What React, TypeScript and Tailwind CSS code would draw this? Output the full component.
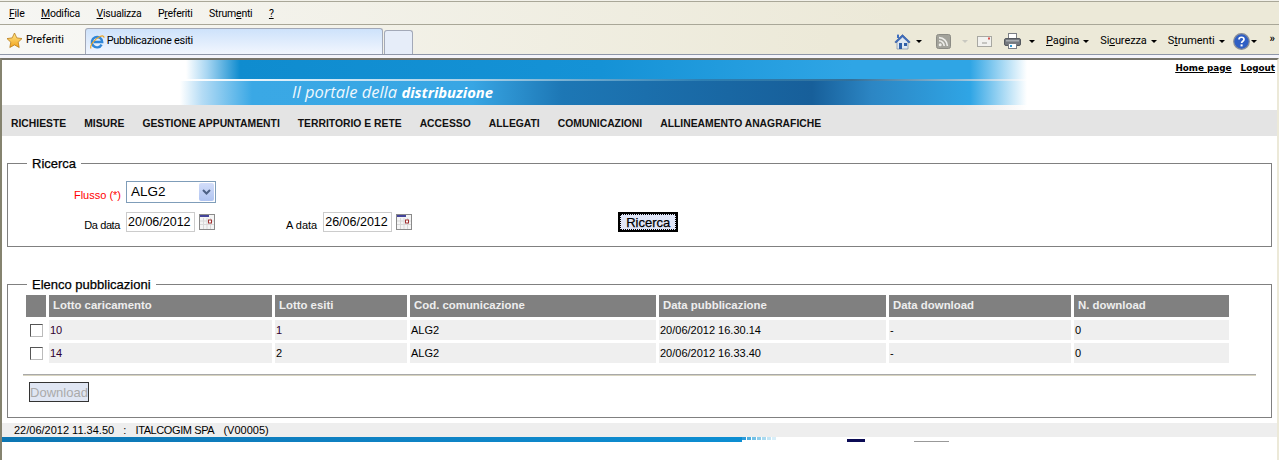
import React from "react";

const arial = "font-['Liberation_Sans',Arial,sans-serif]";
const chrome = "font-['Roboto',sans-serif]";

const menuItems: [string, string, string][] = [
  ["", "F", "ile"],
  ["", "M", "odifica"],
  ["", "V", "isualizza"],
  ["P", "r", "eferiti"],
  ["Strum", "e", "nti"],
  ["", "?", ""],
];

const navItems = ["RICHIESTE", "MISURE", "GESTIONE APPUNTAMENTI", "TERRITORIO E RETE", "ACCESSO", "ALLEGATI", "COMUNICAZIONI", "ALLINEAMENTO ANAGRAFICHE"];

const columns = [
  { title: "Lotto caricamento", width: "w-[223px]" },
  { title: "Lotto esiti", width: "w-[132px]" },
  { title: "Cod. comunicazione", width: "w-[246px]" },
  { title: "Data pubblicazione", width: "w-[227px]" },
  { title: "Data download", width: "w-[182px]" },
  { title: "N. download", width: "w-[155px]" },
];

const rows = [
  ["10", "1", "ALG2", "20/06/2012 16.30.14", "-", "0"],
  ["14", "2", "ALG2", "20/06/2012 16.33.40", "-", "0"],
];

// footer image dissolves into small squares at its right end
const fadeSquares = ["bg-[#2c9ad9]", "bg-[#4fb0e0]", "bg-[#72c0e6]", "bg-[#8fcdea]", "bg-[#a9d9ef]", "bg-[#c4e5f4]", "bg-[#d8eef8]"];

const Caret = ({ className = "" }: { className?: string }) => (
  <span className={`inline-block h-0 w-0 border-x-[3px] border-t-[3px] border-x-transparent border-t-black ${className}`} />
);

const StarIcon = () => (
  <svg width="17" height="17" viewBox="0 0 17 17">
    <defs>
      <linearGradient id="star" x1="0" y1="0" x2="0" y2="1">
        <stop offset="0" stopColor="#ffe98a" />
        <stop offset="1" stopColor="#f2a21c" />
      </linearGradient>
    </defs>
    <path d="M8.5 1l2.3 4.9 5.2.7-3.8 3.6 1 5.3-4.7-2.6-4.7 2.6 1-5.3L1 6.6l5.2-.7z" fill="url(#star)" stroke="#b97c1a" strokeWidth="0.8" />
  </svg>
);

const IeIcon = () => (
  <svg width="16" height="16" viewBox="0 0 16 16">
    <path d="M12.6 10.6A5.2 5.2 0 1 1 13.2 8H4.6" fill="none" stroke="#2f86d8" strokeWidth="2.4" />
    <path d="M2 14.5C.5 12 5 5 11 2.5c2.5-1 4-.6 4 1.2" fill="none" stroke="#e9a52a" strokeWidth="1.2" />
  </svg>
);

const HomeIcon = () => (
  <svg width="17" height="17" viewBox="0 0 17 17">
    <path d="M3 8v8h11V8L8.5 3z" fill="#dfe8f2" stroke="#7d8ea3" strokeWidth="0.7" />
    <path d="M.8 9L8.5 1.6 16.2 9l-1.2 1L8.5 4 2 10z" fill="#3f6fc0" stroke="#2b4f91" strokeWidth="0.5" />
    <rect x="3" y="1.6" width="2" height="3.4" fill="#3f6fc0" />
    <rect x="5" y="10" width="3" height="6" fill="#2f5fa8" />
    <rect x="10" y="10" width="3" height="3" fill="#2f5fa8" />
  </svg>
);

const RssIcon = () => (
  <svg width="15" height="15" viewBox="0 0 15 15">
    <rect x="0.5" y="0.5" width="14" height="14" rx="2" fill="#a3a39b" stroke="#8c8c85" />
    <circle cx="4.2" cy="10.8" r="1.5" fill="#eeeeea" />
    <path d="M3 6.8a5.2 5.2 0 0 1 5.2 5.2M3 3.6A8.4 8.4 0 0 1 11.4 12" fill="none" stroke="#eeeeea" strokeWidth="1.6" />
  </svg>
);

const MailIcon = () => (
  <svg width="15" height="11" viewBox="0 0 15 11">
    <rect x="0.5" y="0.5" width="14" height="10" fill="#f1f1ee" stroke="#a8a8a2" />
    <rect x="5" y="6.5" width="5" height="1" fill="#9a9a94" />
    <rect x="11" y="1.5" width="2" height="2" fill="#d8504a" />
  </svg>
);

const PrinterIcon = () => (
  <svg width="17" height="16" viewBox="0 0 17 16">
    <rect x="4.5" y="0.5" width="8" height="6" fill="#fff" stroke="#7b7f85" />
    <rect x="0.5" y="5.5" width="16" height="7" rx="1.5" fill="#74787e" stroke="#55595f" />
    <rect x="2" y="7" width="13" height="1.5" fill="#a9adb2" />
    <rect x="4.5" y="10.5" width="8" height="5" fill="#fff" stroke="#7b7f85" />
    <rect x="6" y="12" width="2" height="2" fill="#2e9bd6" />
  </svg>
);

const HelpIcon = () => (
  <svg width="17" height="17" viewBox="0 0 17 17">
    <circle cx="8.5" cy="8.5" r="7.8" fill="#2f5fc4" stroke="#8a8f98" strokeWidth="1.2" />
    <path d="M6 6.5c0-3 5-3 5 0 0 1.8-2.4 1.8-2.4 3.6" fill="none" stroke="#fff" strokeWidth="1.7" />
    <rect x="7.6" y="11.4" width="2" height="2" fill="#fff" />
  </svg>
);

const CalendarIcon = () => (
  <svg width="16" height="17" viewBox="0 0 16 17" className="shrink-0">
    <rect x="0.5" y="0.5" width="15" height="15" fill="#f4f4f4" stroke="#8a8a8a" />
    <rect x="1" y="1" width="9" height="2" fill="#44449a" />
    <path d="M1 7h14M1 10.5h14M4.5 4v11M8 4v11M11.5 4v11" stroke="#d8d8d8" strokeWidth="1" />
    <rect x="9.5" y="6" width="3" height="3" fill="#fff" stroke="#a03030" />
  </svg>
);

const DateField = ({ value }: { value: string }) => (
  <input
    readOnly
    value={value}
    className="h-5 w-[69px] border border-[#ccc] px-[1px] text-[12.5px] leading-none text-black outline-none"
  />
);

const Browser = () => (
  <header className={`${chrome} text-[11px] tracking-[-0.1px] text-black`}>
    <div className="h-px bg-[#f2f1ea]" />
    <nav className="flex h-[24px] items-center gap-[16.5px] border-y border-[#a9a798] bg-[linear-gradient(90deg,#f6f6f3,#ece9d8_70%)] pl-[9px] pt-px text-[10.5px] tracking-[-0.25px]">
      {menuItems.map(([before, key, after]) => (
        <span key={before + key}>
          {before}
          <u>{key}</u>
          {after}
        </span>
      ))}
    </nav>
    <div className="flex h-[30px] items-end border-b border-[#8f97a8] bg-[linear-gradient(90deg,#f8f8f5,#ece9d8_65%)]">
      <div className="mb-[5px] flex items-center gap-[3px] pl-[6px]">
        <StarIcon />
        <span>Preferiti</span>
      </div>
      <div className="ml-[21px] flex h-[26px] w-[298px] items-center gap-[2px] rounded-t-[3px] border border-b-0 border-[#a3a9b8] bg-[linear-gradient(#cde2fb,#f2f6fe)] pl-[3px] tracking-[-0.3px]">
        <IeIcon />
        <span>Pubblicazione esiti</span>
      </div>
      <div className="ml-[1px] h-[24px] w-[29px] rounded-t-[3px] border border-b-0 border-[#a3a9b8] bg-[#e6edf9]" />
      <div className="ml-auto mb-[3px] flex h-[20px] items-center">
        <HomeIcon />
        <Caret className="ml-[5px]" />
        <span className="ml-[14px] flex"><RssIcon /></span>
        <span className="ml-[11px] h-0 w-0 border-x-[3px] border-t-[3px] border-x-transparent border-t-[#c8c8c0]" />
        <span className="ml-[9px] flex"><MailIcon /></span>
        <span className="ml-[12px] flex"><PrinterIcon /></span>
        <Caret className="ml-[8px]" />
        <span className="ml-[11px]"><u>P</u>agina</span>
        <Caret className="ml-[4px]" />
        <span className="ml-[11px]">Si<u>c</u>urezza</span>
        <Caret className="ml-[4px]" />
        <span className="ml-[11px]">S<u>t</u>rumenti</span>
        <Caret className="ml-[4px]" />
        <span className="ml-[8px] flex"><HelpIcon /></span>
        <Caret className="ml-[1px]" />
        <span className="mb-[6px] ml-[13px] mr-[4px] text-[11px] font-bold leading-none">»</span>
      </div>
    </div>
    <div className="h-[3px] bg-[#f4f4fb]" />
  </header>
);

const Banner = () => (
  <div className="flex h-[50px] bg-white">
    <div className="flex w-[1025px] shrink-0 flex-col">
      <div className="flex flex-1 flex-col bg-[linear-gradient(90deg,#fff_184px,#a8d6f2_205px,#0f8ccf_238px,#1592d6_600px,#2fa5e5_850px,#2fa5e5_968px,#fff_1025px)]">
        <div className="h-[19px]" />
        <div className="h-[2px] bg-[linear-gradient(90deg,#fff_184px,#d5ebf8_300px,#a8cfe6_480px,#2d7fb3_700px,#33709a_850px,#9fc4dc_968px,#fff_1025px)]" />
        <div className="flex flex-1 items-center bg-[linear-gradient(90deg,#fff_178px,#b5dcf5_200px,#3aa8e5_250px,#38a6e4_470px,#1d77b5_560px,#175f9a_810px,#2c86c4_870px,#2fa5e5_968px,#fff_1025px)] pb-[2px] pl-[290px]">
          <span className="font-['Open_Sans',sans-serif] text-[16.5px] italic leading-none text-[#eef7fd]">
            Il portale della <b className="text-[14.8px] font-bold text-white">distribuzione</b>
          </span>
        </div>
      </div>
      <div className="h-[5px] bg-[linear-gradient(90deg,#e4e4e4_960px,#fff_1025px)]" />
    </div>
    <div className="flex flex-1 justify-end gap-[9px] pr-[2px] pt-[2px] font-['DejaVu_Sans',sans-serif] text-[8.8px] font-bold leading-[12px] text-black underline">
      <a>Home page</a>
      <a>Logout</a>
    </div>
  </div>
);

const Search = () => (
  <fieldset className="mx-[5px] mt-[18px] border border-[#808080] pb-[14px]">
    <legend className="ml-[19px] px-[5px] pt-[2px] text-[13px] leading-[16px] [-webkit-text-stroke:0.25px_black]">Ricerca</legend>
    <div className="flex items-end pt-[9px]">
      <label className="w-[113px] pb-px text-right text-[11px] leading-[14px] text-[#f00]">Flusso (*)</label>
      <div className="ml-[5px] flex h-[22px] w-[90px] items-center justify-between border border-[#7f9db9] pl-[4px] pr-[1px] text-[13.5px]">
        <span>ALG2</span>
        <span className="flex h-[18px] w-[15px] items-center justify-center rounded-[2px] bg-[linear-gradient(#d2ddf9,#b0c4f1)]">
          <svg width="9" height="6" viewBox="0 0 9 6"><path d="M1 1l3.5 3.5L8 1" fill="none" stroke="#4d6185" strokeWidth="2" /></svg>
        </span>
      </div>
    </div>
    <div className="mt-[9px] flex items-end text-[11px] leading-[14px]">
      <label className="w-[112px] text-right tracking-[-0.4px]">Da data</label>
      <span className="ml-[6px] flex items-center gap-[4px]">
        <DateField value="20/06/2012" />
        <CalendarIcon />
      </span>
      <label className="ml-[71px]">A data</label>
      <span className="ml-[6px] flex items-center gap-[4px]">
        <DateField value="26/06/2012" />
        <CalendarIcon />
      </span>
      <button className="ml-[206px] h-5 w-[60px] border-2 border-black bg-[#e0e6f8] p-0 text-[13px] leading-none outline-1 -outline-offset-3 outline-dotted outline-black [-webkit-text-stroke:0.25px_black]">
        Ricerca
      </button>
    </div>
  </fieldset>
);

const Results = () => (
  <fieldset className="mx-[5px] mt-[28px] border border-[#808080] pb-[15px]">
    <legend className="ml-[19px] px-[5px] pt-[2px] text-[13px] leading-[16px] [-webkit-text-stroke:0.25px_black]">Elenco pubblicazioni</legend>
    <table className="-mt-px ml-[15px] table-fixed border-separate border-spacing-[3px] text-[11px]">
      <thead>
        <tr>
          <th className="h-[22px] w-[20px] bg-[#808080] p-0" />
          {columns.map((col) => (
            <th key={col.title} className={`${col.width} h-[22px] bg-[#808080] p-0 pl-[4px] text-left text-[11.4px] font-bold text-[#eee]`}>
              {col.title}
            </th>
          ))}
        </tr>
      </thead>
      <tbody>
        {rows.map((row) => (
          <tr key={row[0]}>
            <td className="h-[20px] p-0 text-center">
              <input type="checkbox" readOnly className="mb-[1px] h-[13px] w-[13px] appearance-none border border-[#555] border-r-[#bbb] border-b-[#bbb] bg-white align-middle" />
            </td>
            {row.map((cell, i) => (
              <td key={i} className={`h-[20px] bg-[#efefef] p-0 pl-[1px] text-left ${i === 0 || cell === "1" ? "text-[#300030]" : "text-black"}`}>
                {cell}
              </td>
            ))}
          </tr>
        ))}
      </tbody>
    </table>
    <div className="mx-[15px] mt-[8px] h-[2px] border-t border-[#a9a9a9] bg-[#d8d4c0]" />
    <button disabled className="ml-[21px] mt-[6px] block h-5 w-[60px] border border-[#333] bg-[#e0e6f3] p-0 text-[13px] leading-none text-[#aaa]">
      Download
    </button>
  </fieldset>
);

const Footer = () => (
  <footer>
    <div className="mt-[5px] h-[14px] whitespace-pre bg-[#eee] pl-[12px] text-[11px] leading-[14px]">
      {"22/06/2012 11.34.50   :   "}
      <span className="tracking-[-0.4px]">ITALCOGIM SPA</span>
      {"   (V00005)"}
    </div>
    <div className="flex h-[5px] items-start">
      <div className="h-full w-[740px] bg-[linear-gradient(90deg,#0c76b3,#0f7fc0_300px,#0d8ed2_740px)]" />
      <div className="flex h-[3px] gap-[1px]">
        {fadeSquares.map((color) => (
          <span key={color} className={`h-[3px] w-[4px] ${color}`} />
        ))}
      </div>
      <div className="ml-[71px] mt-[2px] h-[3px] w-[18px] bg-[#0b0b55]" />
      <div className="ml-[49px] mt-[4px] h-px w-[35px] bg-[#999]" />
    </div>
  </footer>
);

export default function App() {
  return (
    <div className={`${arial} h-[460px] overflow-hidden bg-[#ece9d8] text-black`}>
      <Browser />
      <main className="h-[402px] border-x-2 border-t-2 border-l-[#85836f] border-r-[#ece9d8] border-t-[#76746a] bg-white">
        <Banner />
        <div className="flex h-[26px] items-center gap-[18px] bg-[#e4e4e4] pl-[9px] pt-[2px] text-[10.35px] font-bold text-[#111]">
          {navItems.map((item) => (
            <span key={item}>{item}</span>
          ))}
        </div>
        <Search />
        <Results />
        <Footer />
      </main>
    </div>
  );
}
